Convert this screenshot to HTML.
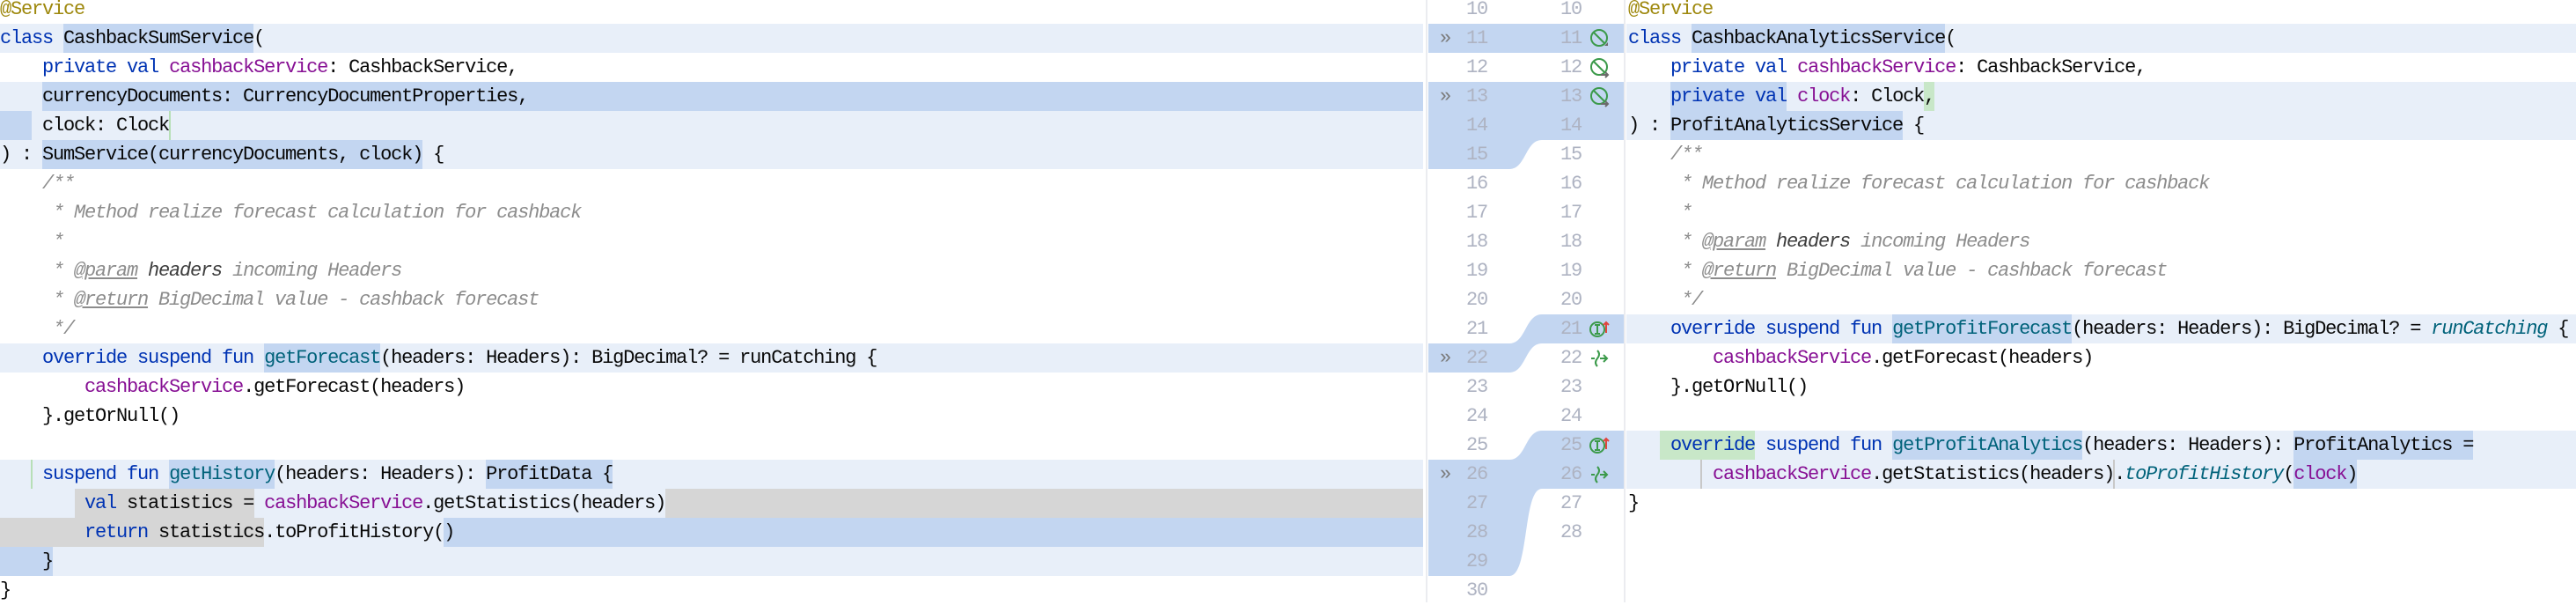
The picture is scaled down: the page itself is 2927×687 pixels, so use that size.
<!DOCTYPE html>
<html><head><meta charset="utf-8"><style>
*{margin:0;padding:0}
body{width:2927px;height:684px;background:#fff;position:relative;overflow:hidden;font-family:"Liberation Mono",monospace;font-size:22px;letter-spacing:-1.2px;color:#080808}
.b{position:absolute;height:33px}
.L{background:#e8eff9}.D{background:#c3d6f1}.G{background:#d6d6d6}.N{background:#c8e7c8}
.r{position:absolute;height:33px;line-height:33px;white-space:pre}
.k{color:#0033b3}.p{color:#871094}.c{color:#8c8c8c;font-style:italic}.a{color:#9e880d}.t{color:#00627a;font-style:italic}.f{color:#00627a}
.u{text-decoration:underline}.h{color:#3d3d3d}
.n{position:absolute;width:40px;text-align:right;color:#aeb3c2;height:33px;line-height:33px;font-size:22px}
.g{position:absolute;color:#7a7a7a;height:33px;line-height:33px;font-size:22px;left:1636px}
</style></head><body>
<div class="b L" style="top:27px;left:0;width:1617px"></div><div class="b D" style="top:27px;left:72px;width:216px"></div>
<div class="b L" style="top:93px;left:0;width:48px"></div><div class="b D" style="top:93px;left:48px;width:1569px"></div>
<div class="b D" style="top:126px;left:0;width:36px"></div><div class="b L" style="top:126px;left:36px;width:1581px"></div>
<div style="position:absolute;top:126px;left:192px;width:2px;height:33px;background:#b7dfb7"></div>
<div class="b L" style="top:159px;left:0;width:1617px"></div><div class="b D" style="top:159px;left:48px;width:432px"></div>
<div class="b L" style="top:390px;left:0;width:1617px"></div><div class="b D" style="top:390px;left:300px;width:132px"></div>
<div class="b L" style="top:522px;left:0;width:1617px"></div><div class="b D" style="top:522px;left:192px;width:120px"></div><div class="b D" style="top:522px;left:552px;width:144px"></div>
<div style="position:absolute;top:522px;left:35px;width:2px;height:33px;background:#b7dfb7"></div>
<div class="b L" style="top:555px;left:0;width:1617px"></div><div class="b G" style="top:555px;left:85px;width:204px"></div><div class="b G" style="top:555px;left:756px;width:861px"></div>
<div class="b G" style="top:588px;left:0;width:300px"></div><div class="b L" style="top:588px;left:300px;width:204px"></div><div class="b D" style="top:588px;left:504px;width:1113px"></div>
<div class="b D" style="top:621px;left:0;width:60px"></div><div class="b L" style="top:621px;left:60px;width:1557px"></div>
<div class="b L" style="top:27px;left:1848px;width:1079px"></div><div class="b D" style="top:27px;left:1922px;width:288px"></div>
<div class="b L" style="top:93px;left:1848px;width:1079px"></div><div class="b D" style="top:93px;left:1898px;width:132px"></div><div class="b N" style="top:93px;left:2186px;width:12px"></div>
<div class="b L" style="top:126px;left:1848px;width:1079px"></div><div class="b D" style="top:126px;left:1898px;width:264px"></div>
<div class="b L" style="top:357px;left:1848px;width:1079px"></div><div class="b D" style="top:357px;left:2150px;width:204px"></div>
<div class="b L" style="top:489px;left:1848px;width:1079px"></div><div class="b N" style="top:489px;left:1886px;width:108px"></div><div class="b D" style="top:489px;left:2150px;width:216px"></div><div class="b D" style="top:489px;left:2606px;width:204px"></div>
<div class="b L" style="top:522px;left:1848px;width:1079px"></div><div class="b D" style="top:522px;left:2606px;width:72px"></div>
<div style="position:absolute;top:522px;left:1932px;width:2px;height:33px;background:#c8c8c8"></div>
<div style="position:absolute;top:522px;left:2401px;width:2px;height:33px;background:#c8c8c8"></div>
<svg style="position:absolute;left:0;top:0" width="2927" height="684">
<g fill="#c3d6f1">
<rect x="1623" y="27" width="129" height="33"/><rect x="1752" y="27" width="93" height="33"/>
<path d="M1623,93 L1845,93 L1845,159 L1752,159 C1733,159 1734,192 1715,192 L1623,192 Z"/>
<rect x="1623" y="390" width="92" height="33"/><rect x="1752" y="357" width="93" height="33"/>
<path d="M1715,390 C1734,390 1733,357 1752,357 L1752,390 C1733,390 1734,423 1715,423 Z"/>
<rect x="1623" y="522" width="92" height="132"/><rect x="1752" y="489" width="93" height="66"/>
<path d="M1715,522 C1734,522 1733,489 1752,489 L1752,555 C1730,555 1738,654 1715,654 Z"/>
</g>
<rect x="1620" y="0" width="2" height="684" fill="#ebecf0"/>
<rect x="1845" y="0" width="2" height="684" fill="#ebecf0"/>
<g fill="none" stroke="#3b9a4a" stroke-width="2">
<circle cx="1817" cy="43" r="9"/><path d="M1811,37 L1823,49"/>
<circle cx="1817" cy="76" r="9"/><path d="M1811,70 L1823,82"/>
<circle cx="1817" cy="109" r="9"/><path d="M1811,103 L1823,115"/>
<circle cx="1815" cy="374" r="8"/><path d="M1812,369 h6 M1815,369 v10 M1812,379 h6"/>
<circle cx="1815" cy="506" r="8"/><path d="M1812,501 h6 M1815,501 v10 M1812,511 h6"/>
<path d="M1808,407 h4 M1815,398 q4,4 0,9 q-4,5 0,9 M1818,407 h8 M1822,403 l4,4 l-4,4"/>
<path d="M1808,539 h4 M1815,530 q4,4 0,9 q-4,5 0,9 M1818,539 h8 M1822,535 l4,4 l-4,4"/>
</g>
<g fill="none" stroke="#6b6b6b" stroke-width="2"><path d="M1819,85 h8 M1824,82 l3,3 l-3,3 M1819,118 h8 M1824,115 l3,3 l-3,3"/></g>
<path d="M1823,52 l4,0 l0,-4 z" fill="#6b6b6b"/>
<g fill="none" stroke="#e0453e" stroke-width="2"><path d="M1825,378 v-12 M1822,369 l3,-3 l3,3 M1825,510 v-12 M1822,501 l3,-3 l3,3"/></g>
</svg>
<div class="g" style="top:27px">»</div><div class="g" style="top:93px">»</div><div class="g" style="top:390px">»</div><div class="g" style="top:522px">»</div>
<div class="n" style="left:1650px;top:-6px">10</div><div class="n" style="left:1650px;top:27px">11</div><div class="n" style="left:1650px;top:60px">12</div><div class="n" style="left:1650px;top:93px">13</div><div class="n" style="left:1650px;top:126px">14</div><div class="n" style="left:1650px;top:159px">15</div><div class="n" style="left:1650px;top:192px">16</div><div class="n" style="left:1650px;top:225px">17</div><div class="n" style="left:1650px;top:258px">18</div><div class="n" style="left:1650px;top:291px">19</div><div class="n" style="left:1650px;top:324px">20</div><div class="n" style="left:1650px;top:357px">21</div><div class="n" style="left:1650px;top:390px">22</div><div class="n" style="left:1650px;top:423px">23</div><div class="n" style="left:1650px;top:456px">24</div><div class="n" style="left:1650px;top:489px">25</div><div class="n" style="left:1650px;top:522px">26</div><div class="n" style="left:1650px;top:555px">27</div><div class="n" style="left:1650px;top:588px">28</div><div class="n" style="left:1650px;top:621px">29</div><div class="n" style="left:1650px;top:654px">30</div>
<div class="n" style="left:1757px;top:-6px">10</div><div class="n" style="left:1757px;top:27px">11</div><div class="n" style="left:1757px;top:60px">12</div><div class="n" style="left:1757px;top:93px">13</div><div class="n" style="left:1757px;top:126px">14</div><div class="n" style="left:1757px;top:159px">15</div><div class="n" style="left:1757px;top:192px">16</div><div class="n" style="left:1757px;top:225px">17</div><div class="n" style="left:1757px;top:258px">18</div><div class="n" style="left:1757px;top:291px">19</div><div class="n" style="left:1757px;top:324px">20</div><div class="n" style="left:1757px;top:357px">21</div><div class="n" style="left:1757px;top:390px">22</div><div class="n" style="left:1757px;top:423px">23</div><div class="n" style="left:1757px;top:456px">24</div><div class="n" style="left:1757px;top:489px">25</div><div class="n" style="left:1757px;top:522px">26</div><div class="n" style="left:1757px;top:555px">27</div><div class="n" style="left:1757px;top:588px">28</div>
<div style="position:absolute;left:0;top:0">
<div class="r" style="top:-6px"><span class="a">@Service</span></div>
<div class="r" style="top:27px"><span class="k">class</span> CashbackSumService(</div>
<div class="r" style="top:60px">    <span class="k">private val</span> <span class="p">cashbackService</span>: CashbackService,</div>
<div class="r" style="top:93px">    currencyDocuments: CurrencyDocumentProperties,</div>
<div class="r" style="top:126px">    clock: Clock</div>
<div class="r" style="top:159px">) : SumService(currencyDocuments, clock) {</div>
<div class="r c" style="top:192px">    /**</div>
<div class="r c" style="top:225px">     * Method realize forecast calculation for cashback</div>
<div class="r c" style="top:258px">     *</div>
<div class="r c" style="top:291px">     * <span class="u">@param</span> <span class="h">headers</span> incoming Headers</div>
<div class="r c" style="top:324px">     * <span class="u">@return</span> BigDecimal value - cashback forecast</div>
<div class="r c" style="top:357px">     */</div>
<div class="r" style="top:390px">    <span class="k">override suspend fun</span> <span class="f">getForecast</span>(headers: Headers): BigDecimal? = runCatching {</div>
<div class="r" style="top:423px">        <span class="p">cashbackService</span>.getForecast(headers)</div>
<div class="r" style="top:456px">    }.getOrNull()</div>
<div class="r" style="top:522px">    <span class="k">suspend fun</span> <span class="f">getHistory</span>(headers: Headers): ProfitData {</div>
<div class="r" style="top:555px">        <span class="k">val</span> statistics = <span class="p">cashbackService</span>.getStatistics(headers)</div>
<div class="r" style="top:588px">        <span class="k">return</span> statistics.toProfitHistory()</div>
<div class="r" style="top:621px">    }</div>
<div class="r" style="top:654px">}</div>
</div>
<div style="position:absolute;left:1850px;top:0">
<div class="r" style="top:-6px"><span class="a">@Service</span></div>
<div class="r" style="top:27px"><span class="k">class</span> CashbackAnalyticsService(</div>
<div class="r" style="top:60px">    <span class="k">private val</span> <span class="p">cashbackService</span>: CashbackService,</div>
<div class="r" style="top:93px">    <span class="k">private val</span> <span class="p">clock</span>: Clock,</div>
<div class="r" style="top:126px">) : ProfitAnalyticsService {</div>
<div class="r c" style="top:159px">    /**</div>
<div class="r c" style="top:192px">     * Method realize forecast calculation for cashback</div>
<div class="r c" style="top:225px">     *</div>
<div class="r c" style="top:258px">     * <span class="u">@param</span> <span class="h">headers</span> incoming Headers</div>
<div class="r c" style="top:291px">     * <span class="u">@return</span> BigDecimal value - cashback forecast</div>
<div class="r c" style="top:324px">     */</div>
<div class="r" style="top:357px">    <span class="k">override suspend fun</span> <span class="f">getProfitForecast</span>(headers: Headers): BigDecimal? = <span class="t">runCatching</span> {</div>
<div class="r" style="top:390px">        <span class="p">cashbackService</span>.getForecast(headers)</div>
<div class="r" style="top:423px">    }.getOrNull()</div>
<div class="r" style="top:489px">    <span class="k">override suspend fun</span> <span class="f">getProfitAnalytics</span>(headers: Headers): ProfitAnalytics =</div>
<div class="r" style="top:522px">        <span class="p">cashbackService</span>.getStatistics(headers).<span class="t">toProfitHistory</span>(<span class="p">clock</span>)</div>
<div class="r" style="top:555px">}</div>
</div>
</body></html>
